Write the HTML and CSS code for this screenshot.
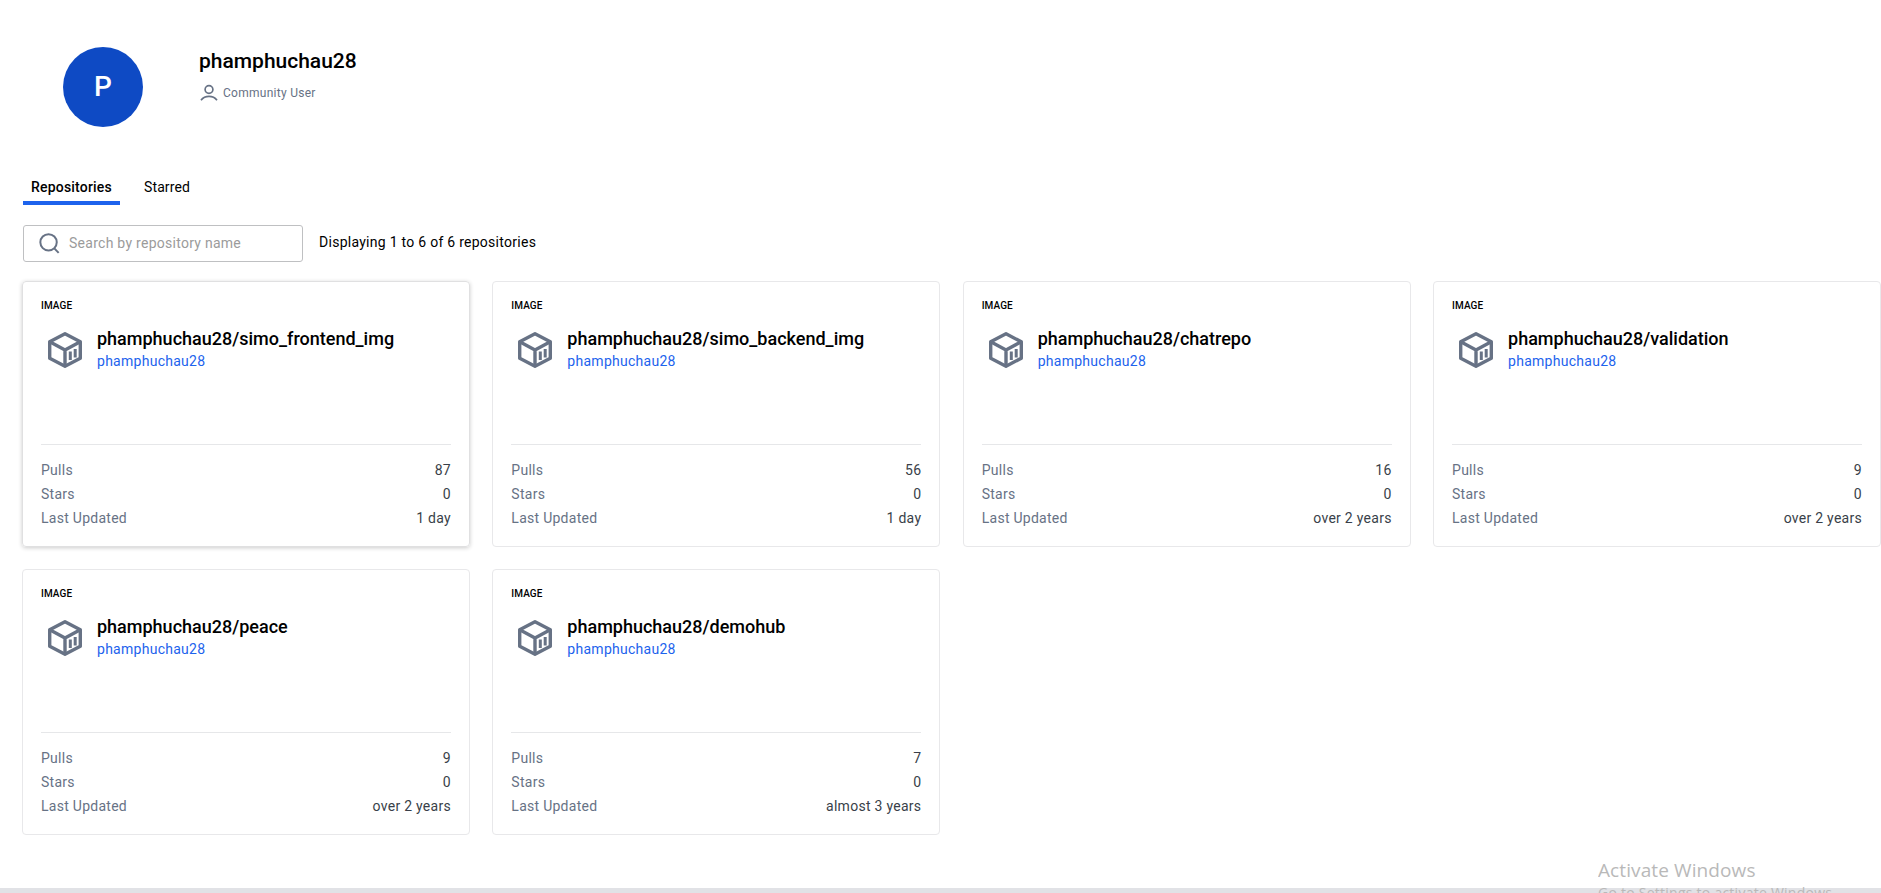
FILE: index.html
```html
<!DOCTYPE html>
<html lang="en">
<head>
<meta charset="utf-8">
<title>phamphuchau28</title>
<link rel="stylesheet" href="styles.css">
</head>
<body>
<svg class="defs" width="0" height="0"><symbol id="cube" viewBox="0 0 36 38"><g fill="none" stroke="#677285" stroke-width="3.4" stroke-linejoin="round"><path d="M18 2.7 L33.3 10.8 V27.2 L18 35.3 L2.7 27.2 V10.8 Z"/><path d="M3.2 11 L18 19 L32.8 11 M18 19 V35"/></g><g stroke="#677285" stroke-width="3"><path d="M23.3 20.5 V28.9 M28.2 18 V26.6"/></g></symbol></svg>
<main class="page">
  <header class="profile">
    <div class="avatar">P</div>
    <div class="who">
      <h1 class="name">phamphuchau28</h1>
      <div class="role"><svg class="person" viewBox="0 0 18 18" fill="none" stroke="#677285" stroke-width="1.7"><circle cx="9" cy="5.5" r="3.9"/><path d="M1 16.2 C5 11.2 13 11.2 17 16.2"/></svg><span>Community User</span></div>
    </div>
  </header>
  <nav class="tabs"><a class="tab active">Repositories</a><a class="tab">Starred</a></nav>
  <div class="toolbar">
    <div class="search"><svg class="glass" viewBox="0 0 22 22" fill="none" stroke="#677285" stroke-width="2.1"><circle cx="10" cy="9.8" r="8.6"/><path d="M15.8 15.8 L20.6 20.8"/></svg><span>Search by repository name</span></div>
    <div class="count">Displaying 1 to 6 of 6 repositories</div>
  </div>
  <section class="grid">
    <article class="card raised"><div class="kind">IMAGE</div><div class="head"><svg class="cube"><use href="#cube"/></svg><div><h2 class="title">phamphuchau28/simo_frontend_img</h2><a class="owner">phamphuchau28</a></div></div><dl class="stats"><dt>Pulls</dt><dd>87</dd><dt>Stars</dt><dd>0</dd><dt>Last Updated</dt><dd>1 day</dd></dl></article>
    <article class="card"><div class="kind">IMAGE</div><div class="head"><svg class="cube"><use href="#cube"/></svg><div><h2 class="title">phamphuchau28/simo_backend_img</h2><a class="owner">phamphuchau28</a></div></div><dl class="stats"><dt>Pulls</dt><dd>56</dd><dt>Stars</dt><dd>0</dd><dt>Last Updated</dt><dd>1 day</dd></dl></article>
    <article class="card"><div class="kind">IMAGE</div><div class="head"><svg class="cube"><use href="#cube"/></svg><div><h2 class="title">phamphuchau28/chatrepo</h2><a class="owner">phamphuchau28</a></div></div><dl class="stats"><dt>Pulls</dt><dd>16</dd><dt>Stars</dt><dd>0</dd><dt>Last Updated</dt><dd>over 2 years</dd></dl></article>
    <article class="card"><div class="kind">IMAGE</div><div class="head"><svg class="cube"><use href="#cube"/></svg><div><h2 class="title">phamphuchau28/validation</h2><a class="owner">phamphuchau28</a></div></div><dl class="stats"><dt>Pulls</dt><dd>9</dd><dt>Stars</dt><dd>0</dd><dt>Last Updated</dt><dd>over 2 years</dd></dl></article>
    <article class="card"><div class="kind">IMAGE</div><div class="head"><svg class="cube"><use href="#cube"/></svg><div><h2 class="title">phamphuchau28/peace</h2><a class="owner">phamphuchau28</a></div></div><dl class="stats"><dt>Pulls</dt><dd>9</dd><dt>Stars</dt><dd>0</dd><dt>Last Updated</dt><dd>over 2 years</dd></dl></article>
    <article class="card"><div class="kind">IMAGE</div><div class="head"><svg class="cube"><use href="#cube"/></svg><div><h2 class="title">phamphuchau28/demohub</h2><a class="owner">phamphuchau28</a></div></div><dl class="stats"><dt>Pulls</dt><dd>7</dd><dt>Stars</dt><dd>0</dd><dt>Last Updated</dt><dd>almost 3 years</dd></dl></article>
  </section>
  <footer class="footer"></footer>
</main>
<div class="watermark"><div class="wm-title">Activate Windows</div><div class="wm-text">Go to Settings to activate Windows.</div></div>
</body>
</html>
```
FILE: styles.css
```css
* { box-sizing: border-box; margin: 0; padding: 0; }
html, body { height: 893px; overflow: hidden; }
body { background: #fff; color: #000; font: 14px/20px Roboto, sans-serif; letter-spacing: 0.27px; }
.defs { position: absolute; }
.page { height: 893px; display: flex; flex-direction: column; }

.profile { display: flex; height: 168px; padding: 47px 0 0 63px; }
.avatar { width: 80px; height: 80px; border-radius: 50%; background: #0e4ac4; color: #fff; font-size: 28px; font-weight: 500; line-height: 80px; text-align: center; letter-spacing: 0; }
.who { margin-left: 56px; }
.name { font-size: 21px; line-height: 28px; font-weight: 500; letter-spacing: 0; }
.role { display: flex; align-items: center; gap: 5px; margin: 8px 0 0 1px; color: #677285; font-size: 12px; line-height: 20px; }
.person { width: 18px; height: 18px; }

.tabs { display: flex; margin-left: 23px; height: 37px; }
.tab { height: 37px; padding: 0 16px; line-height: 38px; border-bottom: 4px solid transparent; letter-spacing: 0.12px; }
.tab.active { width: 97px; margin-right: 8px; padding: 0 8px; font-weight: 500; letter-spacing: 0.2px; border-color: #1d63ed; }

.toolbar { display: flex; margin: 20px 0 0 23px; gap: 16px; }
.search { display: flex; align-items: center; width: 280px; height: 37px; border: 1px solid #bfc0c2; border-radius: 3px; padding: 0 0 1px 15px; gap: 9px; color: #9b9b9b; }
.glass { width: 21px; height: 21px; }
.count { line-height: 35px; }

.grid { display: grid; grid-template-columns: repeat(4, 1fr); gap: 22.4px; margin: 19px 0 0 22px; }
.card { height: 266px; border: 1px solid #e8e8ea; border-radius: 4px; padding: 15px 18px 0; }
.raised { border-color: #e0e0e1; box-shadow: 0 1px 4px rgba(0, 0, 0, 0.2); }
.kind { font-size: 10px; font-weight: 500; line-height: 17px; letter-spacing: 0.1px; }
.head { display: flex; height: 130px; padding: 13px 0 0 6px; }
.cube { width: 36px; height: 38px; margin: 4px 14px 0 0; }
.title { font-size: 18px; line-height: 24px; font-weight: 500; letter-spacing: 0; }
.owner { display: block; line-height: 20px; color: #1d63ed; }
.stats { display: grid; grid-template-columns: auto auto; grid-auto-rows: 24px; line-height: 24px; border-top: 1px solid #e6e7e9; padding-top: 13px; color: #677285; }
.stats dd { text-align: right; color: #393f49; }

.footer { margin-top: auto; height: 5px; background: #e1e2e6; }
.watermark { position: absolute; left: 1598px; top: 857px; height: 36px; overflow: hidden; white-space: nowrap; font-family: "Open Sans", sans-serif; color: #b9b9b9; letter-spacing: 0.1px; }
.wm-title { font-size: 19px; line-height: 26px; }
.wm-text { font-size: 14px; line-height: 20px; letter-spacing: 0.25px; }
```
